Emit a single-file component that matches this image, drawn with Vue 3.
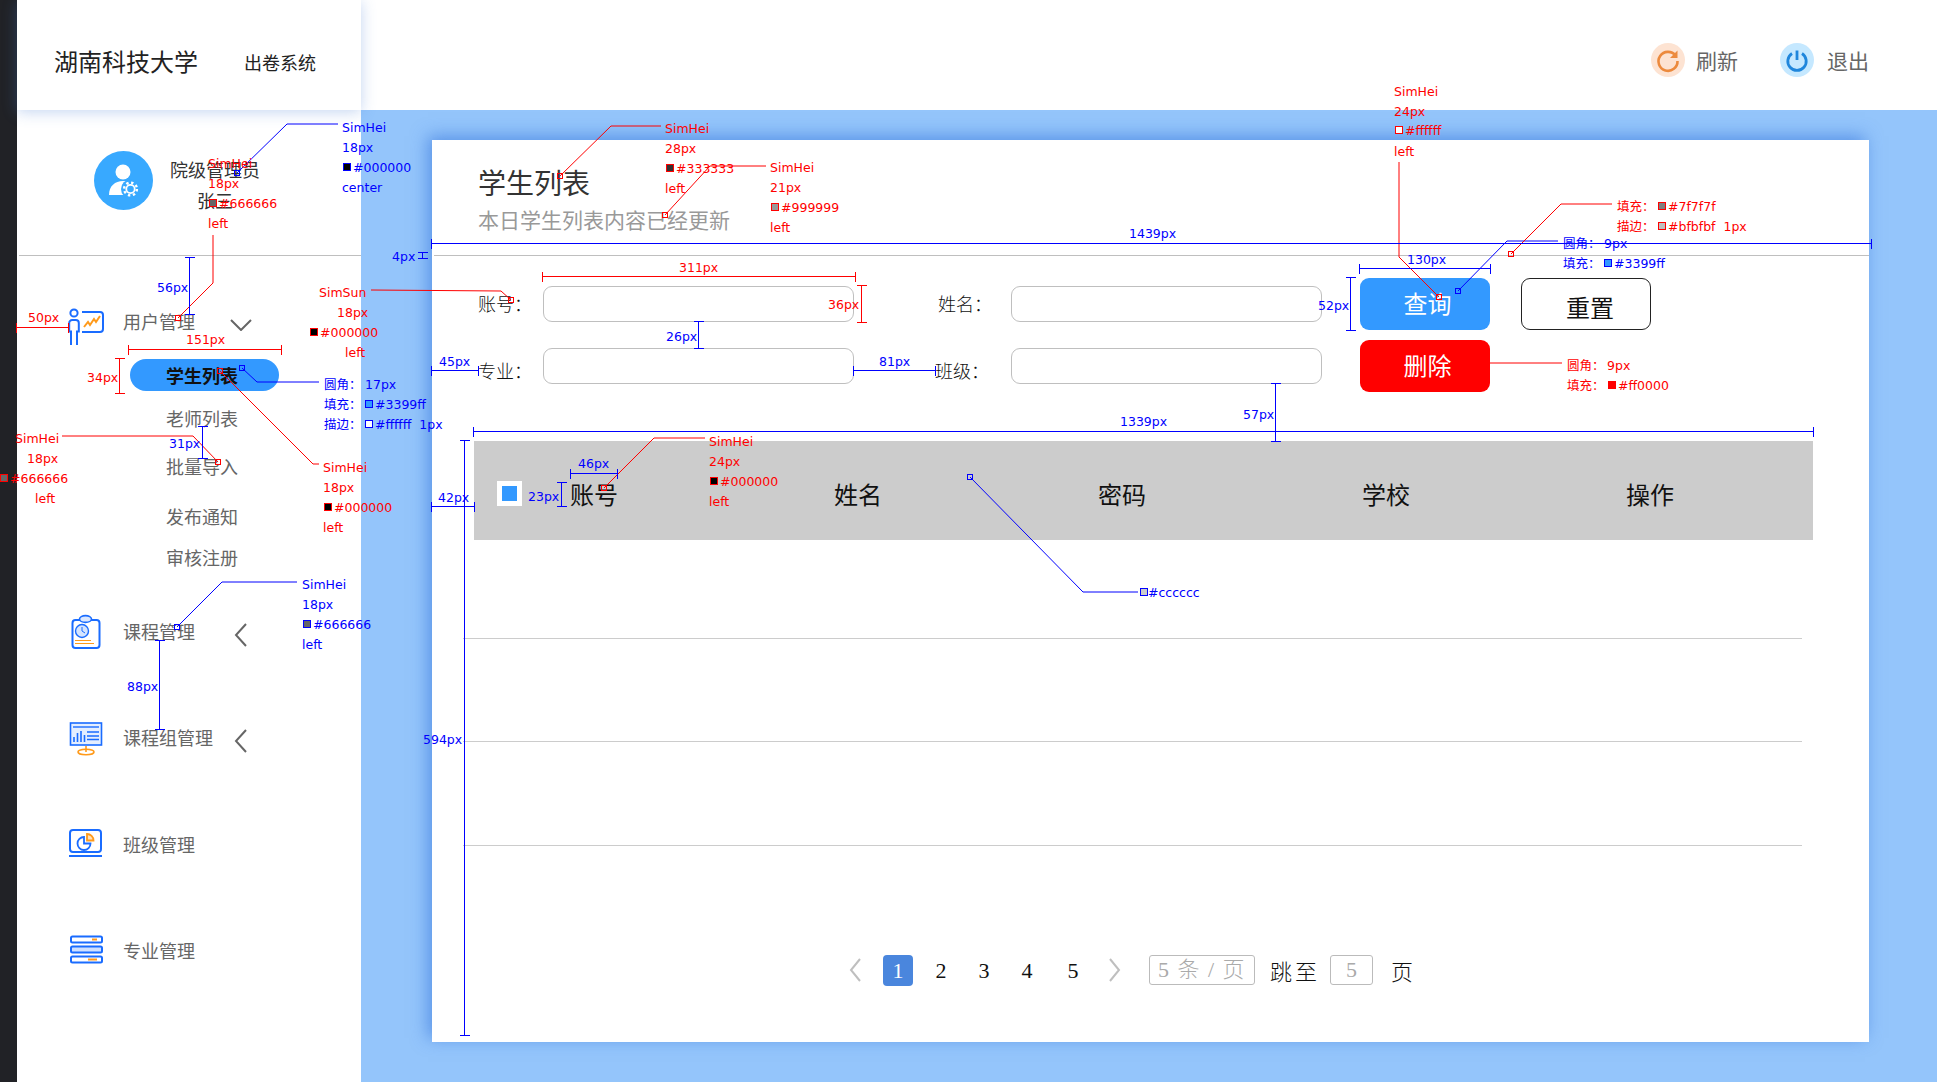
<script setup>
const RED = '#ff0000'
const BLUE = '#0000ff'

const subMenu = [
  { label: '学生列表', active: true, top: 18 },
  { label: '老师列表', top: 11 },
  { label: '批量导入', top: 16 },
  { label: '发布通知', top: 18 },
  { label: '审核注册', top: 9 }
]

const columns = ['姓名', '密码', '学校', '操作']
const rows = [1, 2, 3]
const pages = [1, 2, 3, 4, 5]

// annotation helpers, coordinates are the page's own
const hdim = (x1, x2, y, c) => ({ c, d: `M${x1} ${y}H${x2}M${x1} ${y - 5}V${y + 5}M${x2} ${y - 5}V${y + 5}` })
const vdim = (y1, y2, x, c) => ({ c, d: `M${x} ${y1}V${y2}M${x - 5} ${y1}H${x + 5}M${x - 5} ${y2}H${x + 5}` })
const lead = (pts, c) => ({ c, thin: true, d: 'M' + pts.map((p) => p.join(' ')).join('L') })

const dims = [
  hdim(16.5, 68.5, 327.5, RED),
  hdim(128.5, 281.5, 349.5, RED),
  vdim(358.5, 393.5, 119.5, RED),
  vdim(257.5, 314.5, 189.5, BLUE),
  vdim(426.5, 458.5, 202.5, BLUE),
  vdim(640.5, 729.5, 159.5, BLUE),
  vdim(252.5, 258.5, 422.5, BLUE),
  hdim(431.5, 1871.5, 243.5, BLUE),
  hdim(431.5, 478.5, 370.5, BLUE),
  hdim(431.5, 474.5, 506.5, BLUE),
  vdim(440.5, 1035.5, 464.5, BLUE),
  hdim(542.5, 855.5, 276.5, RED),
  vdim(285.5, 322.5, 861.5, RED),
  vdim(321.5, 348.5, 698.5, BLUE),
  hdim(853.5, 935.5, 370.5, BLUE),
  hdim(1359.5, 1490.5, 268.5, BLUE),
  vdim(277.5, 330.5, 1350.5, BLUE),
  hdim(473.5, 1813.5, 431.5, BLUE),
  vdim(383.5, 441.5, 1275.5, BLUE),
  hdim(570.5, 617.5, 473.5, BLUE),
  vdim(482.5, 506.5, 561.5, BLUE)
]

const leads = [
  lead([[237, 173], [287, 124], [338, 124]], BLUE),
  lead([[178, 318], [213, 283], [213, 235]], RED),
  lead([[371, 290], [501, 291], [511, 300]], RED),
  lead([[242, 368], [257, 382], [319, 382]], BLUE),
  lead([[220, 371], [313, 464], [319, 464]], RED),
  lead([[62, 436], [193, 436], [218, 462]], RED),
  lead([[177, 627], [222, 582], [297, 582]], BLUE),
  lead([[560, 176], [611, 126], [661, 126]], RED),
  lead([[665, 215], [710, 166], [766, 166]], RED),
  lead([[1399, 162], [1399, 257], [1439, 297]], RED),
  lead([[1458, 291], [1507, 241], [1558, 241]], BLUE),
  lead([[1511, 254], [1561, 204], [1612, 204]], RED),
  lead([[1490, 363], [1562, 363]], RED),
  lead([[604, 488], [654, 438], [705, 438]], RED),
  lead([[970, 477], [1083, 592], [1138, 592]], BLUE)
]

// little hollow squares at the end of a leader
const anchors = [
  [237, 173, BLUE], [178, 318, RED], [511, 300, RED], [242, 368, BLUE], [220, 371, RED],
  [218, 462, RED], [177, 627, BLUE], [560, 176, RED], [665, 215, RED], [1439, 297, RED],
  [1458, 291, BLUE], [1511, 254, RED], [604, 488, RED], [970, 477, BLUE]
]

// colour chips: x, centre y, border, fill
const chips = [
  [209, 203, RED, '#666666'], [310, 332, RED, '#000000'], [0, 478, RED, '#666666'], [324, 507, RED, '#000000'],
  [343, 167, BLUE, '#000000'], [365, 404, BLUE, '#3399ff'], [365, 424, BLUE, '#ffffff'], [303, 624, BLUE, '#666666'],
  [666, 168, RED, '#333333'], [771, 207, RED, '#999999'], [1395, 130, RED, '#ffffff'], [1658, 206, RED, '#7f7f7f'],
  [1658, 226, RED, '#bfbfbf'], [1604, 263, BLUE, '#3399ff'], [1608, 385, RED, '#ff0000'], [710, 481, RED, '#000000'],
  [1140, 592, BLUE, '#cccccc']
]

const note = (x, y, c, t) => ({ x, y, c, t })
const notes = [
  note(208, 163, RED, 'SimHei'), note(208, 183, RED, '18px'), note(219, 203, RED, '#666666'), note(208, 223, RED, 'left'),
  note(342, 127, BLUE, 'SimHei'), note(342, 147, BLUE, '18px'), note(353, 167, BLUE, '#000000'), note(342, 187, BLUE, 'center'),
  note(157, 287, BLUE, '56px'), note(28, 317, RED, '50px'), note(186, 339, RED, '151px'), note(87, 377, RED, '34px'),
  note(319, 292, RED, 'SimSun'), note(337, 312, RED, '18px'), note(320, 332, RED, '#000000'), note(345, 352, RED, 'left'),
  note(324, 384, BLUE, '圆角：'), note(365, 384, BLUE, '17px'), note(324, 404, BLUE, '填充：'), note(375, 404, BLUE, '#3399ff'),
  note(324, 424, BLUE, '描边：'), note(375, 424, BLUE, '#ffffff  1px'),
  note(15, 438, RED, 'SimHei'), note(27, 458, RED, '18px'), note(10, 478, RED, '#666666'), note(35, 498, RED, 'left'),
  note(169, 443, BLUE, '31px'),
  note(323, 467, RED, 'SimHei'), note(323, 487, RED, '18px'), note(334, 507, RED, '#000000'), note(323, 527, RED, 'left'),
  note(302, 584, BLUE, 'SimHei'), note(302, 604, BLUE, '18px'), note(313, 624, BLUE, '#666666'), note(302, 644, BLUE, 'left'),
  note(127, 686, BLUE, '88px'), note(423, 739, BLUE, '594px'), note(392, 256, BLUE, '4px'),
  note(439, 361, BLUE, '45px'), note(438, 497, BLUE, '42px'),
  note(665, 128, RED, 'SimHei'), note(665, 148, RED, '28px'), note(676, 168, RED, '#333333'), note(665, 188, RED, 'left'),
  note(770, 167, RED, 'SimHei'), note(770, 187, RED, '21px'), note(781, 207, RED, '#999999'), note(770, 227, RED, 'left'),
  note(1129, 233, BLUE, '1439px'), note(679, 267, RED, '311px'), note(828, 304, RED, '36px'), note(666, 336, BLUE, '26px'),
  note(879, 361, BLUE, '81px'), note(1407, 259, BLUE, '130px'), note(1318, 305, BLUE, '52px'),
  note(1394, 91, RED, 'SimHei'), note(1394, 111, RED, '24px'), note(1405, 130, RED, '#ffffff'), note(1394, 151, RED, 'left'),
  note(1617, 206, RED, '填充：'), note(1668, 206, RED, '#7f7f7f'), note(1617, 226, RED, '描边：'), note(1668, 226, RED, '#bfbfbf  1px'),
  note(1563, 243, BLUE, '圆角：'), note(1604, 243, BLUE, '9px'), note(1563, 263, BLUE, '填充：'), note(1614, 263, BLUE, '#3399ff'),
  note(1567, 365, RED, '圆角：'), note(1607, 365, RED, '9px'), note(1567, 385, RED, '填充：'), note(1618, 385, RED, '#ff0000'),
  note(1120, 421, BLUE, '1339px'), note(1243, 414, BLUE, '57px'), note(578, 463, BLUE, '46px'), note(528, 496, BLUE, '23px'),
  note(709, 441, RED, 'SimHei'), note(709, 461, RED, '24px'), note(720, 481, RED, '#000000'), note(709, 501, RED, 'left'),
  note(1148, 592, BLUE, '#cccccc')
]
</script>

<template>
  <div class="page">
    <div class="rail"></div>

    <aside class="sidebar">
      <div class="brand">
        <span class="brand-name">湖南科技大学</span>
        <span class="brand-sub">出卷系统</span>
      </div>

      <div class="profile">
        <svg class="avatar" width="59" height="59" viewBox="0 0 59 59">
          <circle cx="29.5" cy="29.5" r="29.5" fill="#38a9ff" />
          <circle cx="29" cy="21" r="7.5" fill="#fff" />
          <path d="M15 44c0-9 6-14 14-14s14 5 14 14z" fill="#fff" />
          <circle cx="36.5" cy="38" r="9.5" fill="#38a9ff" />
          <circle cx="36.5" cy="38" r="4.2" fill="none" stroke="#fff" stroke-width="1.8" />
          <circle cx="36.5" cy="38" r="6.4" fill="none" stroke="#fff" stroke-width="2.4" stroke-dasharray="2.4 2.6" />
        </svg>
        <div class="who">
          <div>院级管理员</div>
          <div>张三</div>
        </div>
      </div>

      <nav class="menu">
        <div class="menu-row first">
          <svg class="menu-icon" width="38" height="40" viewBox="0 0 38 40">
            <g fill="none" stroke="#1a6cff" stroke-width="2">
              <circle cx="7" cy="12" r="3.6" />
              <path d="M4 36v-5.5H2.2V22a3 3 0 0 1 3-3h3.6a3 3 0 0 1 3 3v8.5H10V44M4 44v-14" />
              <path d="M15 11h18a3 3 0 0 1 3 3v14a3 3 0 0 1-3 3H15" />
            </g>
            <polyline points="17,26 21,21 23,24 27,18 29,21 33,15" fill="none" stroke="#ff9a1a" stroke-width="2" />
          </svg>
          <span class="menu-label">用户管理</span>
          <svg class="chev" width="22" height="12" viewBox="0 0 22 12">
            <path d="M1 1l10 10L21 1" fill="none" stroke="#666" stroke-width="2" />
          </svg>
        </div>

        <div
          v-for="item in subMenu"
          :key="item.label"
          class="sub-item"
          :class="{ active: item.active }"
          :style="{ marginTop: item.top + 'px' }"
        >{{ item.label }}</div>

        <div class="menu-row course">
          <svg class="menu-icon" width="38" height="40" viewBox="0 0 38 40">
            <rect x="5.5" y="9" width="27" height="28" rx="3" fill="#fff" stroke="#1a6cff" stroke-width="2" />
            <ellipse cx="18.5" cy="8" rx="6" ry="3.4" fill="#dbe8ff" stroke="#1a6cff" stroke-width="1.6" />
            <circle cx="15" cy="20" r="6.5" fill="#d5e5ff" stroke="#1a6cff" stroke-width="1.4" />
            <path d="M15 16v4l3 2" fill="none" stroke="#1a6cff" />
            <path d="M8 29.5h16M8 32.5h19" stroke="#ff9a1a" stroke-width="1.2" />
          </svg>
          <span class="menu-label">课程管理</span>
          <svg class="chev" width="22" height="24" viewBox="0 0 22 24">
            <path d="M16 1L6 12l10 11" fill="none" stroke="#666" stroke-width="2" />
          </svg>
        </div>

        <div class="menu-row group">
          <svg class="menu-icon" width="38" height="40" viewBox="0 0 38 40">
            <rect x="3.5" y="6" width="31" height="22" fill="#e4eeff" stroke="#1a6cff" stroke-width="1.6" />
            <path d="M6 10h26" stroke="#1a6cff" stroke-width="1.4" />
            <path d="M7 25v-5M10.5 25v-9M14 25v-11M17.5 25v-7" stroke="#1a6cff" stroke-width="1.6" />
            <path d="M20 15h12M20 19h12M20 22.5h12" stroke="#1a6cff" stroke-width="1.4" />
            <path d="M19 29v6" stroke="#ff9a1a" stroke-width="1.6" />
            <ellipse cx="19" cy="35" rx="8" ry="2.8" fill="none" stroke="#ff9a1a" stroke-width="1.6" />
          </svg>
          <span class="menu-label">课程组管理</span>
          <svg class="chev" width="22" height="24" viewBox="0 0 22 24">
            <path d="M16 1L6 12l10 11" fill="none" stroke="#666" stroke-width="2" />
          </svg>
        </div>

        <div class="menu-row klass">
          <svg class="menu-icon" width="38" height="40" viewBox="0 0 38 40">
            <rect x="3" y="6" width="31" height="22" rx="3" fill="#fff" stroke="#1a6cff" stroke-width="2" />
            <path d="M2 32h33" stroke="#1a6cff" stroke-width="2" />
            <path d="M17 13a6.5 6.5 0 1 0 6.5 6.5H17z" fill="none" stroke="#1a6cff" stroke-width="1.8" />
            <path d="M20 10a6.5 6.5 0 0 1 6.5 6.5H20z" fill="#ffe3bd" stroke="#ff9a1a" stroke-width="1.8" />
          </svg>
          <span class="menu-label">班级管理</span>
        </div>

        <div class="menu-row major">
          <svg class="menu-icon" width="38" height="40" viewBox="0 0 38 40">
            <rect x="4" y="6.5" width="31" height="6" rx="1.5" fill="#fff" stroke="#1a6cff" stroke-width="2" />
            <rect x="4" y="16.5" width="31" height="6" rx="1.5" fill="#cfe0ff" stroke="#1a6cff" stroke-width="2" />
            <rect x="4" y="26.5" width="31" height="6" rx="1.5" fill="#fff" stroke="#1a6cff" stroke-width="2" />
            <path d="M25 9.5h5M21 29.5h9" stroke="#ff9a1a" stroke-width="2" />
          </svg>
          <span class="menu-label">专业管理</span>
        </div>
      </nav>
    </aside>

    <div class="right">
      <header class="topbar">
        <div class="action">
          <svg width="34" height="34" viewBox="0 0 34 34">
            <circle cx="17" cy="17" r="17" fill="#fde3d2" />
            <path d="M24.5 12.5a9.5 9.5 0 1 0 2 5.5" fill="none" stroke="#ec8a3d" stroke-width="2.6" />
            <path d="M26.5 7.5v7.5h-7.5z" fill="#ec8a3d" />
          </svg>
          <span>刷新</span>
        </div>
        <div class="action exit">
          <svg width="34" height="34" viewBox="0 0 34 34">
            <circle cx="17" cy="17" r="17" fill="#c5e8ff" />
            <path d="M12 10.5a9.2 9.2 0 1 0 10 0" fill="none" stroke="#1f86dc" stroke-width="2.8" />
            <path d="M17 7.5v9.5" stroke="#1f86dc" stroke-width="2.8" />
          </svg>
          <span>退出</span>
        </div>
      </header>

      <main class="content">
        <section class="card">
          <div class="card-head">
            <h1>学生列表</h1>
            <p>本日学生列表内容已经更新</p>
          </div>

          <div class="filters">
            <div class="fields">
              <div class="field"><label>账号：</label><div class="input"></div></div>
              <div class="field"><label class="nudge">姓名：</label><div class="input"></div></div>
              <div class="field low"><label>专业：</label><div class="input"></div></div>
              <div class="field low"><label>班级：</label><div class="input"></div></div>
            </div>
            <div class="buttons">
              <button class="btn primary">查询</button>
              <button class="btn plain">重置</button>
              <button class="btn danger">删除</button>
            </div>
          </div>

          <div class="thead">
            <div class="th-first">
              <span class="check"><i></i></span>
              <span>账号</span>
            </div>
            <div v-for="col in columns" :key="col" class="th">{{ col }}</div>
          </div>
          <div class="tbody">
            <div v-for="row in rows" :key="row" class="tr"></div>
          </div>

          <div class="pager">
            <svg class="arrow" width="12" height="24" viewBox="0 0 12 24">
              <path d="M11 1L2 12l9 11" fill="none" stroke="#bfbfbf" stroke-width="2" />
            </svg>
            <div class="pages">
              <span v-for="p in pages" :key="p" class="page-no" :class="{ current: p === 1 }">{{ p }}</span>
            </div>
            <svg class="arrow next" width="12" height="24" viewBox="0 0 12 24">
              <path d="M1 1l9 11-9 11" fill="none" stroke="#bfbfbf" stroke-width="2" />
            </svg>
            <span class="size-box">5 条 / 页</span>
            <span class="jump">跳至</span>
            <span class="jump-box">5</span>
            <span class="jump-end">页</span>
          </div>
        </section>
      </main>
    </div>

    <!-- design spec marks drawn over the page -->
    <svg class="marks" width="1937" height="1082" viewBox="0 0 1937 1082">
      <path v-for="(l, i) in leads" :key="'l' + i" :d="l.d" :stroke="l.c" fill="none" stroke-width="1" />
      <path v-for="(m, i) in dims" :key="'d' + i" :d="m.d" :stroke="m.c" fill="none" stroke-width="1" shape-rendering="crispEdges" />
      <rect v-for="(a, i) in anchors" :key="'a' + i" :x="a[0] - 2.5" :y="a[1] - 2.5" width="5" height="5" :stroke="a[2]" fill="none" shape-rendering="crispEdges" />
      <rect v-for="(s, i) in chips" :key="'s' + i" :x="s[0] + 0.5" :y="s[1] - 3.5" width="7" height="7" :stroke="s[2]" :fill="s[3]" stroke-width="1.5" shape-rendering="crispEdges" />
    </svg>
    <span
      v-for="(n, i) in notes"
      :key="'n' + i"
      class="note"
      :style="{ left: n.x + 'px', top: n.y - 9 + 'px', color: n.c }"
    >{{ n.t }}</span>
  </div>
</template>

<style scoped>
.page {
  position: relative;
  display: flex;
  width: 1937px;
  height: 1082px;
  overflow: hidden;
  font-family: "Noto Sans CJK SC", "Noto Sans", sans-serif;
  background: #fff;
}

.rail {
  flex: none;
  width: 17px;
  background: #212226;
}

.sidebar {
  flex: none;
  width: 344px;
  background: #fff;
}

.brand {
  position: relative;
  z-index: 2;
  display: flex;
  align-items: center;
  height: 110px;
  padding: 10px 0 0 37px;
  box-sizing: border-box;
  background: #fff;
  box-shadow: 0 2px 14px rgba(70, 125, 210, 0.32);
}

.brand-name {
  font-size: 24px;
  color: #222;
}

.brand-sub {
  margin: 4px 0 0 46px;
  font-size: 18px;
  color: #222;
}

.profile {
  display: flex;
  align-items: center;
  height: 146px;
  margin-left: 2px;
  padding: 0 0 5px 75px;
  box-sizing: border-box;
  border-bottom: 1px solid #bfbfbf;
}

.avatar {
  flex: none;
}

.who {
  margin: 10px 0 0 17px;
  font-size: 18px;
  line-height: 31px;
  color: #333;
  text-align: center;
}

.menu-row {
  display: flex;
  align-items: center;
  height: 40px;
  padding-left: 50px;
}

.menu-row.first { margin-top: 45px; }
.menu-row.course { margin-top: 38px; }
.menu-row.group { margin-top: 66px; }
.menu-row.klass { margin-top: 67px; }
.menu-row.major { margin-top: 66px; }

.menu-icon {
  flex: none;
  overflow: visible;
}

.menu-label {
  flex: none;
  width: 107px;
  margin-left: 18px;
  font-size: 18px;
  color: #666;
  white-space: nowrap;
}

.chev {
  flex: none;
  margin-top: 8px;
}

.sub-item {
  width: 149px;
  height: 32px;
  margin-left: 113px;
  padding-right: 5px;
  box-sizing: border-box;
  font-size: 18px;
  line-height: 32px;
  color: #666;
  text-align: center;
}

.sub-item.active {
  border-radius: 17px;
  background: #3399ff;
  font-weight: 700;
  color: #111;
}

.right {
  display: flex;
  flex: 1;
  flex-direction: column;
  min-width: 0;
}

.topbar {
  display: flex;
  flex: none;
  justify-content: flex-end;
  align-items: center;
  height: 110px;
  padding: 9px 68px 0 0;
  box-sizing: border-box;
  background: #fff;
}

.action {
  display: flex;
  align-items: center;
  gap: 11px;
  font-size: 21px;
  color: #666;
}

.action.exit {
  gap: 13px;
  margin-left: 42px;
}

.content {
  flex: 1;
  padding: 30px 68px 40px 71px;
  background: #94c5fb;
}

.card {
  height: 902px;
  background: #fff;
  box-shadow: -4px -4px 16px rgba(40, 105, 215, 0.55);
}

.card-head {
  height: 116px;
  margin-left: 2px;
  padding: 24px 0 0 44px;
  box-sizing: border-box;
  border-bottom: 1px solid #bfbfbf;
}

.card-head h1 {
  margin: 0;
  font-size: 28px;
  font-weight: 400;
  line-height: 36px;
  color: #333;
}

.card-head p {
  margin: 4px 0 0;
  font-size: 21px;
  line-height: 30px;
  color: #999;
}

.filters {
  display: flex;
  align-items: flex-start;
  margin-top: 22px;
  padding-left: 46px;
}

.fields {
  display: grid;
  grid-template-columns: 376px 387px;
  column-gap: 81px;
  row-gap: 26px;
  margin-top: 8px;
}

.field {
  display: flex;
  align-items: center;
}

.field label {
  flex: 1;
  margin-top: -2px;
  font-size: 18px;
  font-weight: 300;
  color: #111;
}

.field label.nudge {
  padding-left: 3px;
}

.field.low label {
  padding-top: 10px;
}

.input {
  flex: none;
  width: 311px;
  height: 36px;
  box-sizing: border-box;
  border: 1px solid #bfbfbf;
  border-radius: 9px;
  background: #fff;
}

.buttons {
  display: grid;
  grid-template-columns: 130px 130px;
  grid-auto-rows: 52px;
  column-gap: 31px;
  row-gap: 10px;
  margin-left: 38px;
}

.btn {
  padding: 0 0 4px 5px;
  border: 0;
  border-radius: 9px;
  font-family: inherit;
  font-size: 24px;
  color: #fff;
}

.btn.primary { background: #3399ff; }
.btn.danger { background: #ff0000; grid-column: 1; }
.btn.plain {
  padding: 4px 0 0 8px;
  border: 1px solid #222;
  background: #fff;
  color: #111;
}

.thead {
  display: grid;
  grid-template-columns: 252px repeat(4, 264px);
  align-items: center;
  width: 1339px;
  height: 99px;
  margin: 49px 0 0 42px;
  padding-top: 5px;
  box-sizing: border-box;
  background: #ccc;
  font-size: 24px;
  color: #111;
}

.th-first {
  display: flex;
  align-items: center;
  gap: 48px;
  padding-left: 23px;
}

.th {
  text-align: center;
}

.check {
  display: flex;
  flex: none;
  justify-content: center;
  align-items: center;
  width: 25px;
  height: 25px;
  background: #fff;
}

.check i {
  width: 15px;
  height: 15px;
  background: #3399ff;
}

.tbody {
  width: 1339px;
  margin-left: 31px;
}

.tr {
  height: 102px;
  border-bottom: 1px solid #ccc;
}

.tr:first-child {
  height: 98px;
}

.tr:last-child {
  height: 103px;
}

.pager {
  display: flex;
  align-items: center;
  height: 32px;
  margin-top: 108px;
  padding-left: 417px;
  font-family: "Liberation Serif", "Noto Sans CJK SC", serif;
  font-size: 22px;
  font-weight: 300;
  color: #111;
}

.pages {
  display: flex;
  gap: 13px;
  margin-left: 22px;
}

.page-no {
  width: 30px;
  height: 31px;
  border-radius: 4px;
  line-height: 31px;
  text-align: center;
}

.page-no:last-child {
  margin-left: 3px;
}

.page-no.current {
  background: #4a86dd;
  color: #fff;
}

.arrow.next {
  margin-left: 21px;
}

.size-box,
.jump-box {
  height: 30px;
  box-sizing: border-box;
  border: 1px solid #bbb;
  border-radius: 3px;
  line-height: 28px;
  text-align: center;
  color: #aaa;
}

.size-box {
  width: 106px;
  margin-left: 28px;
  letter-spacing: 1.5px;
  white-space: nowrap;
}

.jump {
  margin-left: 15px;
  letter-spacing: 3px;
}

.jump-box {
  width: 43px;
  margin-left: 10px;
}

.jump-end {
  margin-left: 18px;
}

.marks {
  position: absolute;
  top: 0;
  left: 0;
  z-index: 5;
  pointer-events: none;
}

.note {
  position: absolute;
  z-index: 6;
  font-family: "DejaVu Sans", "Noto Sans CJK SC", sans-serif;
  font-size: 12.5px;
  line-height: 20px;
  white-space: pre;
}
</style>

<style>
html,
body {
  margin: 0;
  background: #fff;
}
</style>
